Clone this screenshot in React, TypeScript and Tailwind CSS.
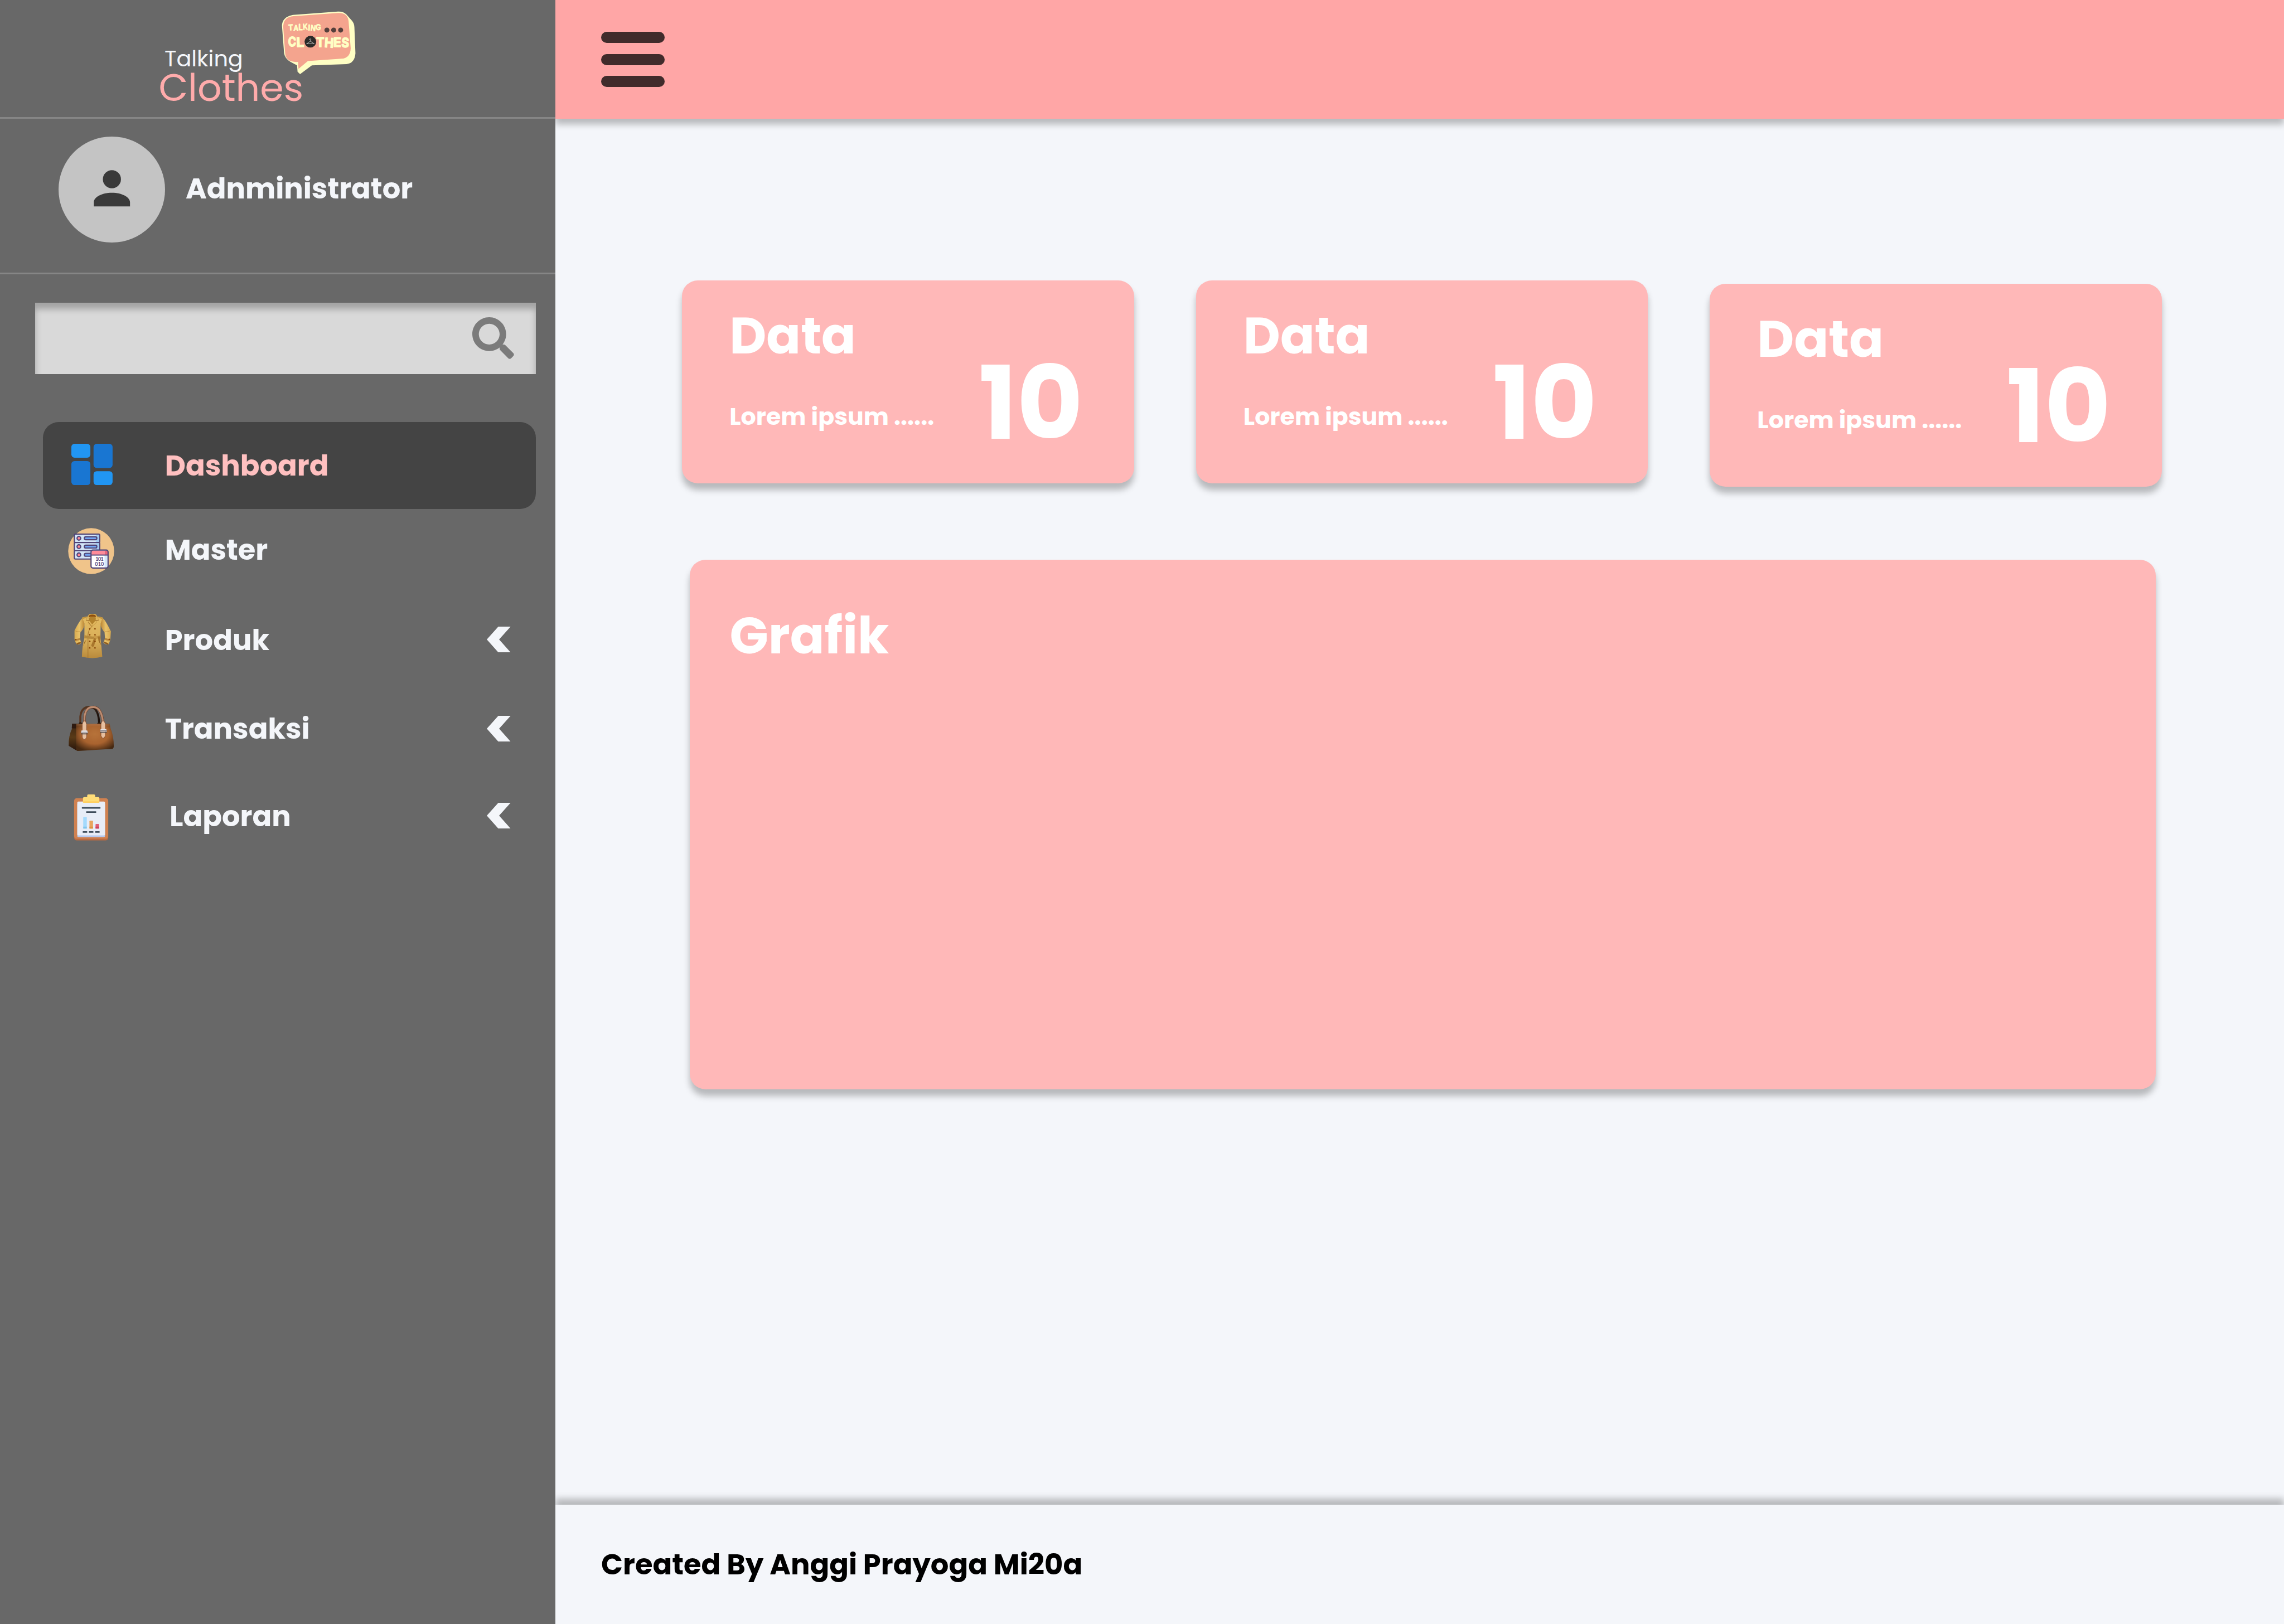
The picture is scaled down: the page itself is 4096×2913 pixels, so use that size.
import type { ReactNode } from "react";
import { FaSearch } from "react-icons/fa";

type Letter = { char: string; x: number; y: number; width: number; tilt: number };

const talkingLetters: Letter[] = [
  { char: "T", x: 111, y: 199, width: 36, tilt: -3 },
  { char: "A", x: 149, y: 204, width: 37, tilt: 2 },
  { char: "L", x: 187, y: 198, width: 32, tilt: 0 },
  { char: "K", x: 222, y: 194, width: 36, tilt: -4 },
  { char: "I", x: 259, y: 201, width: 16, tilt: 2 },
  { char: "N", x: 276, y: 205, width: 39, tilt: 6 },
  { char: "G", x: 318, y: 198, width: 40, tilt: -2 },
];

const clothesLetters: Letter[] = [
  { char: "C", x: 109, y: 322, width: 60, tilt: 0 },
  { char: "L", x: 172, y: 324, width: 58, tilt: -2 },
  { char: "T", x: 322, y: 325, width: 60, tilt: 0 },
  { char: "H", x: 382, y: 328, width: 69, tilt: 4 },
  { char: "E", x: 450, y: 324, width: 58, tilt: 1 },
  { char: "S", x: 512, y: 327, width: 57, tilt: 2 },
];

function Letters({ items, size, stroke }: { items: Letter[]; size: number; stroke: number }) {
  return (
    <g fill="#ffffc4" stroke="#ffffc4" strokeWidth={stroke} strokeLinejoin="round" fontSize={size}>
      {items.map((l) => (
        <text
          key={l.char}
          x={l.x}
          y={l.y}
          textLength={l.width}
          lengthAdjust="spacingAndGlyphs"
          transform={`rotate(${l.tilt} ${l.x + l.width / 2} ${l.y})`}
        >
          {l.char}
        </text>
      ))}
    </g>
  );
}

function LogoBubble() {
  return (
    <svg viewBox="0 0 660 570" className="h-[135.1px] w-[156.4px]" fontFamily="Inter, sans-serif" fontWeight="600">
      <path
        d="M145 83 L485 58 Q525 55 550 80 L590 125 Q609 145 610 175 L618 375 Q612 450 550 456 L288 465 L199 532 L180 514 L176 465 L125 438 Q85 415 78 375 L62 165 Q65 98 145 83Z"
        fill="#ffffc4"
      />
      <path
        d="M150 93 L485 69 Q558 65 566 130 L582 335 Q580 410 512 415 L258 433 L187 492 L184 439 Q92 445 86 375 L71 170 Q75 98 150 93Z"
        fill="#f4a48e"
      />
      <Letters items={talkingLetters} size={60} stroke={4} />
      <Letters items={clothesLetters} size={96} stroke={8} />
      <g fill="#55403c">
        <circle cx="402" cy="198" r="19" />
        <circle cx="453" cy="198" r="19" />
        <circle cx="506" cy="198" r="19" />
      </g>
      <circle cx="277" cy="286" r="44" fill="#2b2a28" />
      <path
        d="M269 272 Q270 264 277 265 Q286 270 277 277 V282 L306 302 H248 L277 282"
        fill="none"
        stroke="#a9a9a7"
        strokeWidth="4.5"
        strokeLinejoin="round"
        strokeLinecap="round"
      />
    </svg>
  );
}

function DashboardIcon() {
  return (
    <svg viewBox="0 0 128 128" className="size-[91px]">
      <rect x="14" y="10" width="48" height="35" rx="8" fill="#2196f3" />
      <rect x="14" y="53.3" width="48" height="60.7" rx="8" fill="#1976d2" />
      <rect x="70" y="10" width="48" height="61" rx="8" fill="#1976d2" />
      <rect x="70" y="79" width="48" height="35" rx="8" fill="#2196f3" />
    </svg>
  );
}

function ServerRow({ y }: { y: number }) {
  return (
    <g stroke="#4f4477" strokeWidth="9">
      <rect x="322.5" y={y} width="192" height="63" rx="8" fill="#d4e6f8" />
      <path d={`M485 ${y + 4.5} h25 v54 h-25z`} fill="#a4cbf2" stroke="none" />
      <circle cx="357" cy={y + 31} r="14" fill="#ff8b96" />
      <rect x="398" y={y + 20} width="95" height="22" rx="11" fill="#73a5f3" />
    </g>
  );
}

function MasterIcon() {
  return (
    <svg viewBox="0 0 128 128" className="size-[91px]">
      <g transform="translate(-86 -286) scale(.33333)">
        <circle cx="450" cy="1050" r="174" fill="#f0c48a" />
        <ServerRow y={922} />
        <ServerRow y={985} />
        <ServerRow y={1047} />
        <rect x="449" y="1042" width="129" height="136" rx="14" fill="#fff" />
        <path d="M551 1080h26v96h-26z" fill="#d4e6f8" />
        <path d="M453 1080v-26q0-8 8-8h90v34z" fill="#ff8b99" />
        <path d="M551 1046h16q8 0 8 8v26h-24z" fill="#e8647a" />
        <rect x="449" y="1042" width="129" height="136" rx="14" fill="none" stroke="#4f4477" strokeWidth="9" />
        <path d="M449 1080h129" stroke="#4f4477" strokeWidth="8" />
        <text fill="#4f4477" fontFamily="Lato, sans-serif" fontSize="38" fontWeight="700">
          <tspan x="483" y="1124" textLength="61">101</tspan>
          <tspan x="479" y="1160" textLength="67">010</tspan>
        </text>
      </g>
    </svg>
  );
}

function CoatIcon() {
  return (
    <svg viewBox="0 0 128 128" className="size-[91px]">
      <defs>
        <linearGradient id="coatBody" x1="0" y1="0" x2="0" y2="1">
          <stop offset="0" stopColor="#e3bb62" />
          <stop offset=".6" stopColor="#d8ae58" />
          <stop offset="1" stopColor="#b98a3c" />
        </linearGradient>
        <linearGradient id="coatSleeveLeft" x1="0" y1="0" x2="1" y2="0">
          <stop offset="0" stopColor="#d9ab4f" />
          <stop offset=".5" stopColor="#e8c26a" />
          <stop offset="1" stopColor="#b98433" />
        </linearGradient>
        <linearGradient id="coatSleeveRight" x1="1" y1="0" x2="0" y2="0">
          <stop offset="0" stopColor="#d9ab4f" />
          <stop offset=".5" stopColor="#e8c26a" />
          <stop offset="1" stopColor="#b98433" />
        </linearGradient>
      </defs>
      <g transform="translate(4 -19) scale(.33333)">
        <path d="M117 88Q98 98 54 184V250L66 284Q88 298 105 278L95 245L99 196Q118 180 130 145V90Z" fill="url(#coatSleeveLeft)" />
        <path d="M265 88Q284 98 329 190L325 252L314 286Q290 295 272 275L285 245L281 196Q264 180 251 145V90Z" fill="url(#coatSleeveRight)" />
        <path d="M60 187Q80 195 99 192M321 187Q300 195 282 192" fill="none" stroke="#b98737" strokeWidth="3" />
        <path d="M56 247Q78 250 95 240L99 252Q78 262 60 260ZM325 249Q303 248 285 240L281 252Q300 262 321 260Z" fill="#b5843a" />
        <path d="M68 282Q86 268 105 273Q92 290 72 289ZM312 284Q294 268 274 272Q288 288 308 290Z" fill="#8c5a1e" />
        <path d="M113 84L145 78H235L266 84L252 130L250 240Q258 300 264 382Q190 402 110 382Q112 300 129 240V130Z" fill="url(#coatBody)" />
        <path d="M113 84L145 78V88L115 96ZM266 84L235 78V88L264 96Z" fill="#c2953f" />
        <path d="M156 95Q188 62 222 95L190 150Z" fill="#b3822c" />
        <path d="M162 70Q188 48 216 70L214 84Q188 72 164 84Z" fill="#8f4f0c" />
        <path d="M190 54Q155 50 142 106L165 108L158 122L184 152Q204 140 222 122L215 108L236 106Q225 50 190 54ZM188 62Q212 62 216 75L212 108L188 136L166 108L162 75Q166 62 188 62Z" fill="#dfb55b" stroke="#a8772c" strokeWidth="2" fillRule="evenodd" />
        <path d="M142 106L166 108M236 106L212 108M158 122L184 152" stroke="#7f4d12" strokeWidth="3" />
        <path d="M190 148Q158 178 156 215V390" fill="none" stroke="#a06d26" strokeWidth="4" />
        <path d="M129 218Q190 238 251 220V240Q190 252 128 242Z" fill="#b78a3c" />
        <path d="M205 232L180 296Q190 314 202 302Q208 270 220 236ZM228 230L242 280Q250 270 246 232Z" fill="#a8762c" />
        <ellipse cx="216" cy="233" rx="14" ry="11" fill="#c99b48" />
        <path d="M146 250L120 302L128 270Z M232 256L258 300L248 268Z" fill="#9d6e2a" />
        <g fill="#8a4a0c">
          <circle cx="169" cy="171" r="6" />
          <circle cx="209" cy="171" r="6" />
          <circle cx="169" cy="216" r="6" />
          <circle cx="209" cy="216" r="6" />
          <circle cx="169" cy="266" r="6" />
          <circle cx="209" cy="266" r="6" />
          <circle cx="169" cy="315" r="6" />
          <circle cx="209" cy="315" r="6" />
          <circle cx="63" cy="253" r="6" />
          <circle cx="317" cy="251" r="6" />
        </g>
      </g>
    </svg>
  );
}

function BagIcon() {
  return (
    <svg viewBox="0 0 128 128" className="size-[91px]">
      <defs>
        <radialGradient id="bagFront" cx=".5" cy=".38" r=".66">
          <stop offset="0" stopColor="#b7733a" />
          <stop offset=".55" stopColor="#a9632f" />
          <stop offset="1" stopColor="#452811" />
        </radialGradient>
        <linearGradient id="bagSide" x1="0" y1="0" x2="0" y2="1">
          <stop offset="0" stopColor="#3d2412" />
          <stop offset=".5" stopColor="#593a17" />
          <stop offset="1" stopColor="#27140c" />
        </linearGradient>
        <linearGradient id="bagBackHandle" x1="0" y1="0" x2="1" y2="0">
          <stop offset="0" stopColor="#5a3621" />
          <stop offset=".5" stopColor="#4a3424" />
          <stop offset="1" stopColor="#1c100b" />
        </linearGradient>
      </defs>
      <g transform="translate(4 -244) scale(.33333)">
        <path d="M98 884V835Q105 762 168 761Q236 764 240 884" fill="none" stroke="url(#bagBackHandle)" strokeWidth="15" />
        <path d="M84 888Q98 868 114 888ZM224 890Q240 862 258 890Z" fill="#2c190e" />
        <path d="M36 888H80V1095L64 1089L10 1056Q8 980 36 924Z" fill="url(#bagSide)" />
        <path d="M36 888H66V924H33Z" fill="#2e1a10" />
        <path d="M66 889H320L326 922Q352 985 351 1060Q350 1078 338 1079L84 1095Q70 1095 66 1084Z" fill="url(#bagFront)" />
        <path d="M68 898H320" stroke="#b98564" strokeWidth="6" />
        <path d="M129 895V850Q132 762 196 762Q262 764 271 895" fill="none" stroke="#6f4029" strokeWidth="19" />
        <path d="M129 895V850Q132 762 196 762Q262 764 271 895" fill="none" stroke="#bd8d72" strokeWidth="13" />
        <path d="M122 868L112 895V990Q128 1028 146 990V895L137 868ZM263 868L254 890V980Q270 1018 288 980V890L278 868Z" fill="#e7bf9f" stroke="#81492b" strokeWidth="4" />
        <path d="M107 940H150L156 960H102ZM252 929H294L300 948H246Z" fill="#e4e1e4" />
        <path d="M102 953H156M246 941H300" stroke="#817b80" strokeWidth="4" />
        <path d="M104 966H154M248 953H298" stroke="#4d4a50" strokeWidth="7" />
      </g>
    </svg>
  );
}

function ClipboardIcon() {
  return (
    <svg viewBox="0 0 128 128" className="size-[91px]">
      <g transform="matrix(.33333 0 0 .4209 -36 -494)">
        <rect x="171" y="1228" width="258" height="245" rx="20" ry="16" fill="#bb6b42" />
        <rect x="171" y="1220" width="258" height="243" rx="20" ry="16" fill="#d08150" />
        <rect x="195" y="1250" width="210" height="203" rx="8" ry="6" fill="#b6c9ee" />
        <rect x="195" y="1240" width="210" height="203" rx="8" ry="6" fill="#e8edf7" />
        <path d="M270 1213v-10q0-6 8-6h44q8 0 8 6v10h22q10 0 10 8v26h-124v-26q0-8 10-8z" fill="#ffdd78" />
        <path d="M238 1238h124v4q0 5-8 5h-108q-8 0-8-5z" fill="#ffcf60" />
        <g fill="#3d4b5a">
          <rect x="229" y="1273" width="142" height="9" rx="5" ry="4" />
          <rect x="261" y="1298" width="78" height="9" rx="5" ry="4" />
          <rect x="235" y="1418" width="36" height="9" rx="5" ry="4" />
          <rect x="282" y="1418" width="36" height="9" rx="5" ry="4" />
          <rect x="329" y="1418" width="36" height="9" rx="5" ry="4" />
        </g>
        <rect x="240" y="1332" width="27" height="70" rx="5" ry="4" fill="#a4dafd" />
        <path d="M240 1390h27v8q0 4-5 4h-17q-5 0-5-4z" fill="#83c6ec" />
        <rect x="287" y="1354" width="27" height="48" rx="5" ry="4" fill="#e8a560" />
        <path d="M287 1390h27v8q0 4-5 4h-17q-5 0-5-4z" fill="#e0923f" />
        <rect x="333" y="1374" width="27" height="28" rx="5" ry="4" fill="#e05f77" />
        <path d="M333 1390h27v8q0 4-5 4h-17q-5 0-5-4z" fill="#cb4460" />
      </g>
    </svg>
  );
}

function Chevron() {
  return (
    <svg viewBox="0 0 60 65" className="h-[46.2px] w-[42.7px]">
      <path d="M60 0H29L0 32.5L29 65H60L31 32.5Z" fill="#f4f6fa" />
    </svg>
  );
}

type MenuRowProps = {
  icon: ReactNode;
  label: string;
  row: string;
  text: string;
  expandable?: boolean;
};

function MenuRow({ icon, label, row, text, expandable }: MenuRowProps) {
  return (
    <div className={`flex items-center pr-[45.5px] pl-[41.2px] ${row}`}>
      {icon}
      <span className={`text-[51.2px] leading-[60px] font-bold ${text}`}>{label}</span>
      {expandable && (
        <span className="ml-auto">
          <Chevron />
        </span>
      )}
    </div>
  );
}

function DataCard({ offset = "" }: { offset?: string }) {
  return (
    <div
      className={`flex h-[364px] w-[810.7px] rounded-[28.4px] bg-[#ffb8b8] pl-[85px] text-white shadow-[0_11.4px_11.4px_rgba(0,0,0,0.25)] ${offset}`}
    >
      <div className="w-[447px] pt-[44px] font-bold">
        <div className="text-[91px] leading-[110px]">Data</div>
        <div className="mt-[60px] text-[42.7px] leading-[60px] whitespace-nowrap">Lorem ipsum ......</div>
      </div>
      <div className="pt-[121px] text-[182px] leading-[200px] font-bold">10</div>
    </div>
  );
}

export default function App() {
  return (
    <div className="flex h-[2913px] w-[4096px] overflow-hidden bg-[#f4f6fa] font-['Poppins','Inter',sans-serif]">
      <aside className="relative z-10 flex w-[995.6px] shrink-0 flex-col bg-[#686868] text-[#f4f6fa]">
        <div className="relative h-[210.3px] pt-[78.9px]">
          <div className="pl-[294.9px] text-[39.8px] leading-[52px]">Talking</div>
          <div className="pl-[284.4px] text-[68.3px] leading-[52px] text-[#ffabab]">Clothes</div>
          <div className="absolute top-[7.1px] left-[490.7px]">
            <LogoBubble />
          </div>
        </div>
        <div className="h-[3px] bg-[#868686]" />

        <div className="flex h-[275.7px] items-start pt-[31.3px] pl-[105.2px]">
          <div className="flex size-[190.6px] items-center justify-center rounded-full bg-[#c4c4c4]">
            <svg viewBox="0 0 24 24" className="mb-[4px] size-[97.4px]" fill="#3a3a3a">
              <circle cx="12" cy="8" r="4" />
              <path d="M12 14c-4.4 0-8 1.9-8 4.2V20h16v-1.8c0-2.3-3.6-4.2-8-4.2z" />
            </svg>
          </div>
          <span className="ml-[37.2px] text-[51.2px] leading-[187px] font-bold">Adnministrator</span>
        </div>
        <div className="h-[3px] bg-[#868686]" />

        <div className="mt-[51.3px] ml-[62.6px] flex h-[128px] w-[898.8px] items-center justify-end bg-[#d9d9d9] pr-[39.8px] shadow-[inset_0_11.4px_11.4px_rgba(0,0,0,0.25)]">
          <FaSearch className="mb-[2px] size-[74.7px] text-[#7b7b7b]" />
        </div>

        <nav className="mt-[85.3px] ml-[76.8px] w-[884.6px]">
          <MenuRow icon={<DashboardIcon />} label="Dashboard" row="h-[156.4px] rounded-[28.4px] bg-[#444444]" text="mt-[1.2px] ml-[86.7px] text-[#ffc0c0]" />
          <MenuRow icon={<MasterIcon />} label="Master" row="h-[150.8px]" text="mb-[4.8px] ml-[86.7px]" />
          <MenuRow icon={<CoatIcon />} label="Produk" row="h-[166.4px]" text="mt-[2.4px] ml-[86.7px]" expandable />
          <MenuRow icon={<BagIcon />} label="Transaksi" row="h-[153.6px]" text="mt-[1px] ml-[86.7px]" expandable />
          <MenuRow icon={<ClipboardIcon />} label="Laporan" row="h-[159.3px]" text="mt-[1px] ml-[95px]" expandable />
        </nav>
      </aside>

      <div className="flex flex-1 flex-col">
        <header className="flex h-[213.3px] items-center bg-[#ffa6a6] pl-[82.5px] shadow-[0_11.4px_11.4px_rgba(0,0,0,0.25)]">
          <div className="flex flex-col gap-[19.9px]">
            <div className="h-[19.9px] w-[113.8px] rounded-full bg-[#412b2b]" />
            <div className="h-[19.9px] w-[113.8px] rounded-full bg-[#412b2b]" />
            <div className="h-[19.9px] w-[113.8px] rounded-full bg-[#412b2b]" />
          </div>
        </header>

        <main className="flex-1 pt-[290.2px] pl-[227.6px]">
          <div className="flex items-start gap-[110.9px]">
            <DataCard />
            <DataCard />
            <DataCard offset="mt-[5.7px]" />
          </div>
          <section className="mt-[130.8px] ml-[14.2px] h-[950px] w-[2628.3px] rounded-[28.4px] bg-[#ffb8b8] pt-[80.7px] pl-[71px] text-white shadow-[0_11.4px_11.4px_rgba(0,0,0,0.25)]">
            <h2 className="text-[91px] leading-[110px] font-bold">Grafik</h2>
          </section>
        </main>

        <footer className="flex h-[213.6px] items-center bg-[#f4f6fa] pl-[82.5px] text-[51.2px] font-bold text-black shadow-[0_-11.4px_11.4px_rgba(0,0,0,0.25)]">
          Created By Anggi Prayoga Mi20a
        </footer>
      </div>
    </div>
  );
}
